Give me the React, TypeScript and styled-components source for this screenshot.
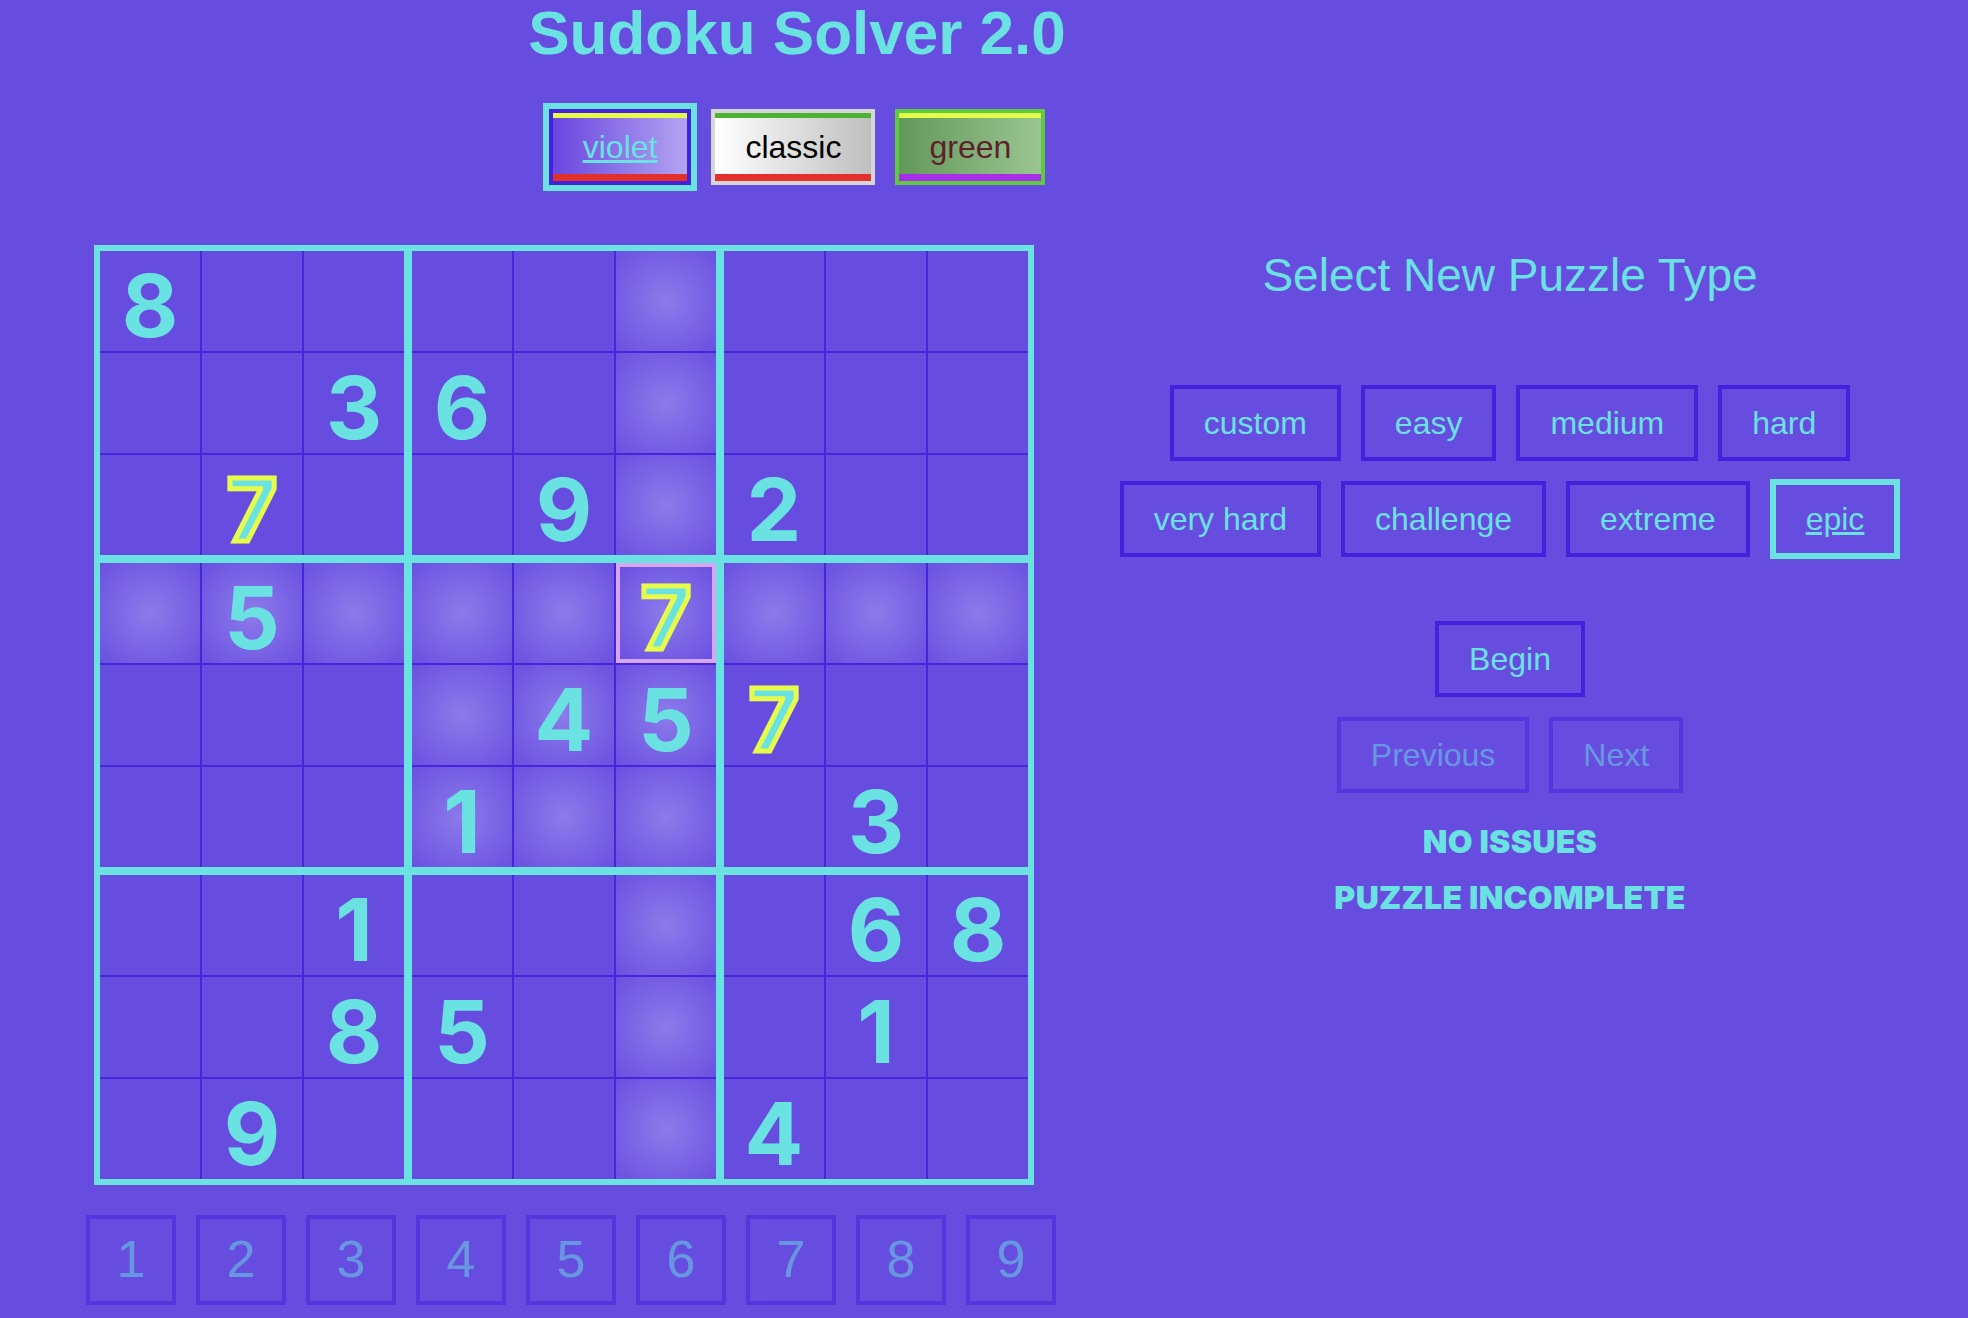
import React from 'react'
import styled, { createGlobalStyle, css } from 'styled-components'

const colors = {
  bg: '#674ce0',
  cyan: '#6ae2e2',
  line: '#4626dc',
  btnBorder: '#4422dd',
  glowIn: '#8c7bea',
  glowOut: '#6a50e1',
  selected: '#d6a6f0',
  yellow: '#e6fb4a',
}

const GlobalStyle = createGlobalStyle`
  html {
    background: ${colors.bg};
  }
  body {
    margin: 0;
    padding: 0;
    font-family: "Liberation Sans", Arial, sans-serif;
  }
`

const Page = styled.div`
  display: flex;
  flex-direction: column;
  width: 1968px;
`

const Header = styled.header`
  width: 1594px;
  display: flex;
  flex-direction: column;
  align-items: center;
`

const Title = styled.h1`
  margin: 2px 0 0;
  font-size: 62px;
  line-height: 1;
  font-weight: 700;
  color: ${colors.cyan};
`

const ThemeRow = styled.div`
  display: flex;
  gap: 20px;
  margin-top: 45px;
`

type ThemeKind = 'violet' | 'classic' | 'green'

const themeLook = {
  violet: css`
    border-color: #4422dd;
    background: linear-gradient(to right, #6946e0, #b3a4f1);
    color: ${colors.cyan};
    box-shadow: inset 0 5px 0 #e4fb48, inset 0 -7px 0 #e4302a;
  `,
  classic: css`
    border-color: #d6d6d6;
    background: linear-gradient(to right, #ffffff, #bfbfbf);
    color: #000;
    box-shadow: inset 0 5px 0 #4cb232, inset 0 -7px 0 #e4302a;
  `,
  green: css`
    border-color: #5ccc3c;
    background: linear-gradient(to right, #62985a, #9ac592);
    color: #5e1e2c;
    box-shadow: inset 0 5px 0 #e4fb48, inset 0 -7px 0 #a62ee8;
  `,
}

const ThemeButton = styled.button<{ $kind: ThemeKind; $active?: boolean }>`
  font-family: "Liberation Sans", Arial, sans-serif;
  font-size: 32px;
  line-height: 38px;
  padding: 15px 30px;
  border: 4px solid;
  ${({ $kind }) => themeLook[$kind]}
  ${({ $active }) =>
    $active &&
    css`
      outline: 6px solid ${colors.cyan};
      text-decoration: underline;
    `}
`

const Main = styled.main`
  display: flex;
  align-items: flex-start;
  margin-top: 60px;
`

const LeftCol = styled.section`
  width: 1060px;
  display: flex;
  flex-direction: column;
  align-items: flex-start;
`

const Board = styled.div`
  margin-left: 94px;
  display: grid;
  grid-template-columns: repeat(3, auto);
  gap: 8px;
  padding: 6px;
  background: ${colors.cyan};
`

const Box = styled.div`
  display: grid;
  grid-template-columns: repeat(3, 100px);
  grid-auto-rows: 100px;
  gap: 2px;
  background: ${colors.line};
`

const Cell = styled.div<{ $glow?: boolean; $selected?: boolean }>`
  box-sizing: border-box;
  display: flex;
  align-items: center;
  justify-content: center;
  padding-top: 8px;
  background: ${({ $glow }) =>
    $glow ? `radial-gradient(circle, ${colors.glowIn} 0%, ${colors.glowOut} 100%)` : colors.bg};
  border: ${({ $selected }) => ($selected ? `4px solid ${colors.selected}` : 'none')};
`

const Digit = styled.span<{ $entered?: boolean }>`
  font-family: Inter, "Noto Sans", sans-serif;
  font-weight: 700;
  font-size: 87px;
  line-height: 1;
  color: ${colors.cyan};
  ${({ $entered }) =>
    $entered &&
    css`
      -webkit-text-stroke: 5px ${colors.yellow};
    `}
`

const NumPad = styled.div`
  margin: 30px 0 0 86px;
  display: flex;
  gap: 20px;
`

const DimButton = styled.button`
  box-sizing: border-box;
  background: transparent;
  border: 4px solid ${colors.btnBorder};
  color: ${colors.cyan};
  font-family: "Liberation Sans", Arial, sans-serif;
  opacity: 0.5;
`

const PadKey = styled(DimButton)`
  width: 90px;
  height: 90px;
  font-size: 52px;
  line-height: 1;
  padding: 0 0 2px;
`

const RightCol = styled.section`
  width: 900px;
  display: flex;
  flex-direction: column;
  align-items: center;
`

const Subtitle = styled.h2`
  margin: 3px 0 0;
  font-size: 46px;
  font-weight: 400;
  color: ${colors.cyan};
`

const LevelList = styled.div`
  margin-top: 83px;
  max-width: 820px;
  display: flex;
  flex-wrap: wrap;
  justify-content: center;
  align-items: center;
  column-gap: 20px;
  row-gap: 18px;
`

const ActionButton = styled.button<{ $active?: boolean }>`
  background: transparent;
  border: ${({ $active }) => ($active ? `6px solid ${colors.cyan}` : `4px solid ${colors.btnBorder}`)};
  color: ${colors.cyan};
  font-family: "Liberation Sans", Arial, sans-serif;
  font-size: 32px;
  line-height: 38px;
  padding: 15px 30px;
  text-decoration: ${({ $active }) => ($active ? 'underline' : 'none')};
`

const BeginButton = styled(ActionButton)`
  margin-top: 62px;
`

const NavRow = styled.div`
  margin-top: 20px;
  display: flex;
  gap: 20px;
`

const NavButton = styled(DimButton)`
  font-size: 32px;
  line-height: 38px;
  padding: 15px 30px;
`

const Status = styled.p<{ $first?: boolean }>`
  margin: ${({ $first }) => ($first ? '29px 0 0' : '17px 0 0')};
  font-family: Inter, "Noto Sans", sans-serif;
  font-weight: 900;
  font-size: 32px;
  letter-spacing: 0.3px;
  color: ${colors.cyan};
`

// 0 = empty; negative = user entry (outlined)
const puzzle: number[][] = [
  [8, 0, 0, 0, 0, 0, 0, 0, 0],
  [0, 0, 3, 6, 0, 0, 0, 0, 0],
  [0, -7, 0, 0, 9, 0, 2, 0, 0],
  [0, 5, 0, 0, 0, -7, 0, 0, 0],
  [0, 0, 0, 0, 4, 5, -7, 0, 0],
  [0, 0, 0, 1, 0, 0, 0, 3, 0],
  [0, 0, 1, 0, 0, 0, 0, 6, 8],
  [0, 0, 8, 5, 0, 0, 0, 1, 0],
  [0, 9, 0, 0, 0, 0, 4, 0, 0],
]

const selRow = 3
const selCol = 5

const levels = ['custom', 'easy', 'medium', 'hard', 'very hard', 'challenge', 'extreme', 'epic']

export default function App() {
  const boxes = []
  for (let b = 0; b < 9; b++) {
    const br = Math.floor(b / 3) * 3
    const bc = (b % 3) * 3
    const cells = []
    for (let i = 0; i < 9; i++) {
      const r = br + Math.floor(i / 3)
      const c = bc + (i % 3)
      const v = puzzle[r][c]
      const sameBox =
        Math.floor(r / 3) === Math.floor(selRow / 3) && Math.floor(c / 3) === Math.floor(selCol / 3)
      const glow = r === selRow || c === selCol || sameBox
      cells.push(
        <Cell key={i} $glow={glow} $selected={r === selRow && c === selCol}>
          {v !== 0 && <Digit $entered={v < 0}>{Math.abs(v)}</Digit>}
        </Cell>
      )
    }
    boxes.push(<Box key={b}>{cells}</Box>)
  }

  return (
    <>
      <GlobalStyle />
      <Page>
        <Header>
          <Title>Sudoku Solver 2.0</Title>
          <ThemeRow>
            <ThemeButton $kind="violet" $active>violet</ThemeButton>
            <ThemeButton $kind="classic">classic</ThemeButton>
            <ThemeButton $kind="green">green</ThemeButton>
          </ThemeRow>
        </Header>
        <Main>
          <LeftCol>
            <Board>{boxes}</Board>
            <NumPad>
              {[1, 2, 3, 4, 5, 6, 7, 8, 9].map((n) => (
                <PadKey key={n}>{n}</PadKey>
              ))}
            </NumPad>
          </LeftCol>
          <RightCol>
            <Subtitle>Select New Puzzle Type</Subtitle>
            <LevelList>
              {levels.map((l) => (
                <ActionButton key={l} $active={l === 'epic'}>
                  {l}
                </ActionButton>
              ))}
            </LevelList>
            <BeginButton>Begin</BeginButton>
            <NavRow>
              <NavButton>Previous</NavButton>
              <NavButton>Next</NavButton>
            </NavRow>
            <Status $first>NO ISSUES</Status>
            <Status>PUZZLE INCOMPLETE</Status>
          </RightCol>
        </Main>
      </Page>
    </>
  )
}
